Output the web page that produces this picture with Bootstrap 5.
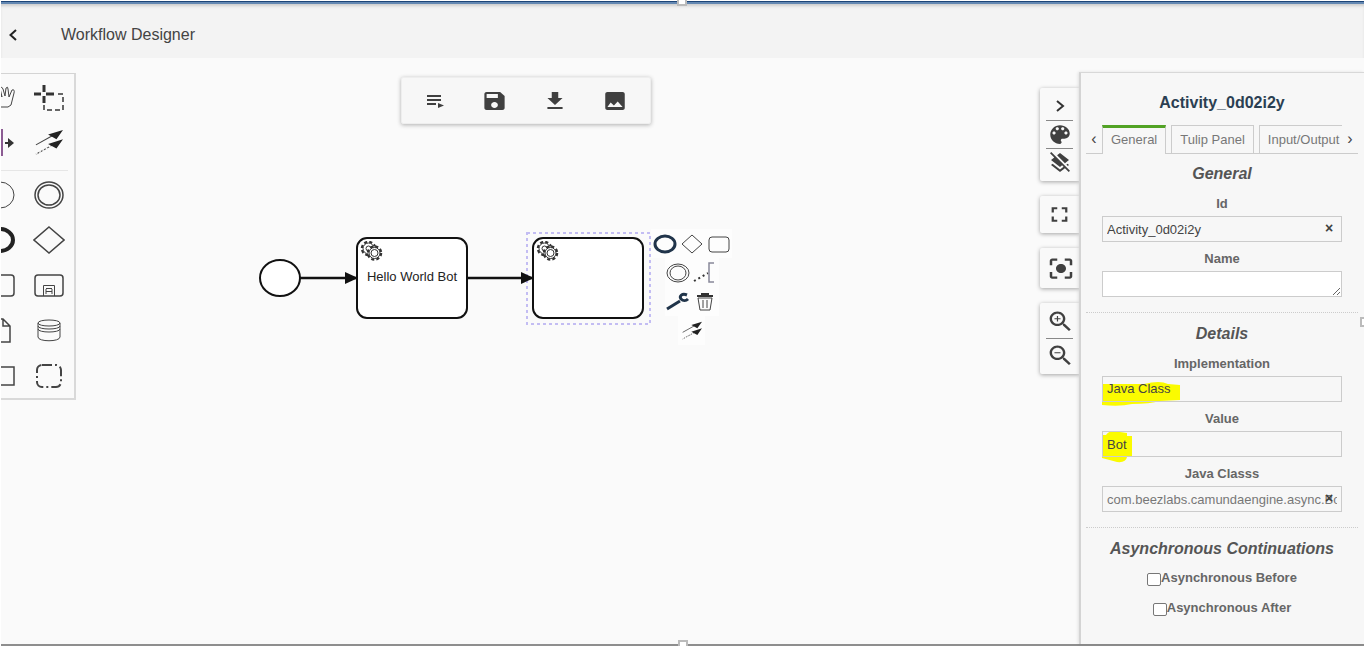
<!DOCTYPE html>
<html lang="en">
<head>
<meta charset="utf-8">
<meta name="viewport" content="width=device-width, initial-scale=1">
<title>Workflow Designer</title>
<link rel="stylesheet" href="https://cdn.jsdelivr.net/npm/bootstrap@5.3.0/dist/css/bootstrap.min.css">
<style>
  body { font-family: "Liberation Sans", Arial, sans-serif; font-size: 13px; color: #555; background: #fff; }
  button { border: 0; padding: 0; background: transparent; color: #404040; }
  svg { display: block; }
  .shell { min-height: 100vh; padding: 1px 0 4px 1px; }
  .app-header { height: 57px; background: #f3f3f3; border-top: 1px solid #1d4577; box-shadow: inset 0 2px #6488b2, inset 0 5px 3px -1px #ccc; padding-top: 9px; }
  .app-header h1 { font-size: 15px; line-height: 20px; color: #444; margin: 0 0 0 36px; }
  .back { width: 20px; height: 20px; }
  .workspace { background: #fafafa; border-bottom: 2px solid #8e8e8e; }
  .canvas { inset: 0; width: 100%; height: 100%; }
  .grip { width: 10px; height: 6px; background: #fff; border: 2px solid #bbb; left: 50%; transform: translateX(-50%); z-index: 5; }
  .grip-top { top: 0; border-top: 0; }
  .grip-bottom { bottom: -2px; border-bottom: 0; }
  .grip-side { width: 4px; height: 10px; right: 0; top: 317px; background: #fff; border: 2px solid #bbb; border-right: 0; z-index: 5; }

  .palette { width: 75px; margin-top: 15px; padding: 1px 0; border: 1px solid #d4d4d4; border-left: 0; border-right: 2px solid #d9d9d9; border-bottom: 2px solid #d9d9d9; background: #fafafa; }
  .palette-group { display: grid; grid-template-columns: 45px 45px; grid-auto-rows: 45px; margin-left: -20px; }
  .palette button { display: grid; place-items: center; }
  .palette hr { margin: 5px 6px 1px 0; border-color: #aaa; }
  .ln { fill: none; stroke: #444; }

  .toolbar { margin: 19px 65px 0 0; width: 250px; height: 47px; background: #f7f7f7; border: 1px solid #eee; border-radius: 2px; box-shadow: 0 1px 4px rgba(0,0,0,.3); padding: 0 5px 0 3px; }
  .toolbar button { width: 60px; height: 40px; display: grid; place-items: center; }

  .context-pad { left: 650px; top: 171px; width: 81px; z-index: 2; }
  .context-pad button { width: 27px; height: 29px; display: grid; place-items: center; background: rgba(255,255,255,.6); }

  .view-tools { width: 39px; margin-top: 30px; gap: 15px; }
  .tool-box { background: #f9f9f9; border-radius: 2px 0 0 2px; box-shadow: 0 1px 4px rgba(0,0,0,.35); padding: 5px 6px 6px; }
  .tool-box.roomy { padding: 7px 6px; }
  .tool-box button { height: 26px; width: 100%; display: grid; place-items: center; }
  .tool-box hr { margin: 1px 0 0; border-color: #888; opacity: 1; }
  .tool-box.zoom hr { margin: 4px 0 3px; }

  .panel { width: 285px; margin-top: 14px; background: #f7f7f7; border-left: 2px solid #d4d4d4; border-top: 1px solid #d8d8d8; box-shadow: -1px 0 3px rgba(0,0,0,.1); padding: 16px 6px 0 5px; position: relative; z-index: 1; }
  .panel h2 { font-size: 16px; line-height: 28px; font-weight: 700; color: #2b3f52; margin: 0 0 8px; text-align: center; }
  .app-header h1 { font-size: 16px; }
  .tab-strip { height: 29px; border-bottom: 1px solid #ccc; }
  .tab-strip .scroller { width: 16px; flex: none; color: #444; font-size: 16px; line-height: 28px; }
  .tab-list { overflow: hidden; gap: 5px; margin-bottom: -1px; height: 29px; }
  .tab-list a { flex: none; height: 28px; line-height: 28px; padding: 0 8px; border: 1px solid #ccc; border-bottom: 0; color: #777; text-decoration: none; }
  .tab-list a.current { border-top: 3px solid #52a325; line-height: 24px; height: 29px; background: #f7f7f7; }
  .group { padding: 0 16px; text-align: center; }
  .panel hr { margin: 15px 0 11px; border-top: 1px dotted #ccc; opacity: 1; }
  .group h3 { font-size: 16px; font-style: italic; font-weight: 700; line-height: 20px; margin: 0 -16px 10px; white-space: nowrap; }
  .group:first-of-type h3 { margin-top: 10px; }
  .field { margin-top: 7px; position: relative; }
  .field label { display: block; font-weight: 700; line-height: 20px; margin-bottom: 2px; color: #666; }
  .field input, .field select, .field textarea { display: block; width: 100%; height: 26px; border: 1px solid #ccc; border-radius: 0; background: transparent; padding: 0 4px; font-size: 13px; line-height: 24px; color: #444; appearance: none; position: relative; }
  .field textarea { background: #fff; resize: vertical; }
  .field .muted-value { color: #777; }
  .clear { position: absolute; right: 6px; bottom: 5px; width: 14px; height: 18px; font-weight: 700; font-size: 14px; line-height: 18px; }
  .marker { position: absolute; left: 0; bottom: -6px; }
  .check-line { height: 30px; font-weight: 700; color: #666; }
  .check-line input { width: 14px; height: 13px; margin: 3px 0 0; appearance: none; border: 1px solid #777; border-radius: 2px; background: #fff; }
</style>
</head>
<body>
<svg width="0" height="0" class="position-absolute" aria-hidden="true">
  <defs>
    <symbol id="connect" viewBox="0 0 32 30">
      <path d="M2 17 L20 7 M2 27 L20 17" fill="none" stroke="#444" stroke-width="1.2"/>
      <path d="M2 27 L20 17" fill="none" stroke="#fafafa" stroke-width="1.6" stroke-dasharray="2 2"/>
      <path d="M31 1 L24 11 L15 6 Z M31 11 L24 21 L15 16 Z" fill="#222"/>
    </symbol>
    <symbol id="gears" viewBox="0 0 24 20">
      <g fill="#fff" stroke="#333">
        <circle cx="8.500" cy="7.500" r="6.500" stroke-width="2.500" stroke-dasharray="3 2.100"/>
        <circle cx="8.500" cy="7.500" r="5.500"/><circle cx="8.500" cy="7.500" r="2.500"/>
        <circle cx="14.500" cy="12" r="6.500" stroke-width="2.500" stroke-dasharray="3 2.100"/>
        <circle cx="14.500" cy="12" r="5.500"/><circle cx="14.500" cy="12" r="3.500"/>
      </g>
    </symbol>
    <marker id="arrow" markerWidth="14" markerHeight="12" refX="12" refY="6" markerUnits="userSpaceOnUse" orient="auto"><path d="M0 0 L13 6 L0 12 Z" fill="#111" stroke="none"/></marker>
  </defs>
</svg>

<div class="shell d-flex flex-column position-relative">
  <span class="grip grip-top position-absolute"></span>
  <span class="grip-side position-absolute"></span>
  <header class="app-header d-flex align-items-center">
    <button class="back ms-1" aria-label="Back"><svg width="16" height="16" viewBox="0 0 16 16"><path d="M11 3 L5.500 8 L11 13" fill="none" stroke="#222" stroke-width="2"/></svg></button>
    <h1 class="fw-normal">Workflow Designer</h1>
  </header>

  <main class="workspace d-flex flex-grow-1 position-relative">
    <svg class="canvas position-absolute" role="img" aria-label="Workflow diagram">
      <rect x="526" y="175" width="123" height="91" fill="none" stroke="#c3bdf3" stroke-width="2" stroke-dasharray="3 3"/>
      <g stroke="#111" stroke-width="2" fill="#fff">
        <ellipse cx="279" cy="220" rx="20" ry="18"/>
        <path d="M299 220 H356" stroke-width="2.500" marker-end="url(#arrow)"/>
        <path d="M467 220 H532" stroke-width="2.500" marker-end="url(#arrow)"/>
        <rect x="356" y="180" width="110" height="80" rx="10"/>
        <rect x="532" y="180" width="110" height="80" rx="10"/>
      </g>
      <use href="#gears" x="359" y="183" width="24" height="20"/>
      <use href="#gears" x="535" y="183" width="24" height="20"/>
      <text x="411" y="223" text-anchor="middle" font-size="13" fill="#222">Hello World Bot</text>
    </svg>

    <nav class="palette overflow-hidden position-relative align-self-start flex-shrink-0" aria-label="Elements">
      <div class="palette-group">
        <button aria-label="Hand tool"><svg width="32" height="30" viewBox="0 0 32 30"><path class="ln" d="M10 17 L8 9 Q9 6 11 9 L14 14 L12 5 Q14 3 15 6 L17 13 L18 5 Q20 3 20 6 L21 14 L24 7 Q27 6 26 10 L23 22 L20 24 H12" stroke="#567"/></svg></button>
        <button aria-label="Lasso tool"><svg width="32" height="30" viewBox="0 0 32 30"><path d="M1 11 H8 M13 11 H21 M11 2 V9 M11 13 V20" stroke="#333" stroke-width="3"/><path d="M25 11 H30 V27 H11 V22" fill="none" stroke="#666" stroke-width="2" stroke-dasharray="5 3"/></svg></button>
        <button aria-label="Space tool"><svg width="32" height="30" viewBox="0 0 32 30"><path d="M14 1 V28" stroke="#8c5c93" stroke-width="2"/><path d="M17 15 H22" stroke="#333" stroke-width="2"/><path d="M20 10 L26 15 L20 20 Z" fill="#333"/></svg></button>
        <button aria-label="Connect"><svg width="30" height="28"><use href="#connect"/></svg></button>
      </div>
      <hr>
      <div class="palette-group">
        <button aria-label="Start event"><svg width="32" height="30" viewBox="0 0 32 30"><ellipse class="ln" cx="12" cy="15" rx="14" ry="13"/></svg></button>
        <button aria-label="Intermediate event"><svg width="32" height="30" viewBox="0 0 32 30"><ellipse class="ln" cx="16" cy="15" rx="14" ry="13" stroke-width="1.500"/><ellipse class="ln" cx="16" cy="15" rx="11" ry="10" stroke-width="1.500"/></svg></button>
        <button aria-label="End event"><svg width="32" height="30" viewBox="0 0 32 30"><ellipse cx="12" cy="15" rx="13" ry="11" fill="none" stroke="#222" stroke-width="4"/></svg></button>
        <button aria-label="Gateway"><svg width="32" height="30" viewBox="0 0 32 30"><path class="ln" stroke-width="1.500" d="M16 2 L31 15 L16 28 L1 15 Z"/></svg></button>
        <button aria-label="Task"><svg width="32" height="30" viewBox="0 0 32 30"><rect class="ln" stroke-width="1.500" x="-4" y="5" width="30" height="21" rx="3"/></svg></button>
        <button aria-label="Subprocess"><svg width="32" height="30" viewBox="0 0 32 30"><rect class="ln" stroke-width="1.500" x="2" y="5" width="28" height="21" rx="3"/><path class="ln" d="M10.500 26 V15.500 H21.500 V26 M13 21.500 H19 M13 19 V24 M19 19 V24 M13 18.500 H19"/></svg></button>
        <button aria-label="Data object"><svg width="32" height="30" viewBox="0 0 32 30"><path class="ln" stroke-width="1.500" d="M6 4 H15 L22 11 V27 H6 M15 4 V11 H22"/></svg></button>
        <button aria-label="Data store"><svg width="32" height="30" viewBox="0 0 32 30"><path class="ln" d="M5 8 V22 C5 27 27 27 27 22 V8 C27 4 5 4 5 8 C5 12 27 12 27 8 M5 11 C5 15 27 15 27 11 M5 14 C5 18 27 18 27 14"/></svg></button>
        <button aria-label="Pool"><svg width="32" height="30" viewBox="0 0 32 30"><rect class="ln" stroke-width="1.500" x="-4" y="7" width="30" height="18"/></svg></button>
        <button aria-label="Group"><svg width="32" height="30" viewBox="0 0 32 30"><rect class="ln" x="4" y="5" width="24" height="22" rx="5" stroke-width="2" stroke-dasharray="10 3 2 3"/></svg></button>
      </div>
    </nav>

    <section class="flex-grow-1 d-flex justify-content-center align-items-start">
      <div class="toolbar position-relative d-flex align-items-center justify-content-between" role="toolbar">
        <button aria-label="Properties list"><svg width="24" height="24" viewBox="0 0 24 24"><path d="M4 7 H18 M4 11 H18 M4 15 H13" stroke="#404040" stroke-width="2"/><path d="M15 14 L21 16.500 L15 19 Z" fill="#404040"/></svg></button>
        <button aria-label="Save"><svg width="27" height="24" viewBox="0 0 24 24" preserveAspectRatio="none" fill="currentColor"><path d="M17 3H5c-1.110 0-2 .9-2 2v14c0 1.100.89 2 2 2h14c1.100 0 2-.9 2-2V7l-4-4zm-5 16c-1.660 0-3-1.340-3-3s1.340-3 3-3 3 1.340 3 3-1.340 3-3 3zm3-10H5V5h10v4z"/></svg></button>
        <button aria-label="Download"><svg width="26" height="24" viewBox="0 0 24 24" preserveAspectRatio="none" fill="currentColor"><path d="M19 9h-4V3H9v6H5l7 7 7-7zM5 18v2h14v-2H5z"/></svg></button>
        <button aria-label="Export image"><svg width="26" height="24" viewBox="0 0 24 24" preserveAspectRatio="none" fill="currentColor"><path d="M21 19V5c0-1.100-.9-2-2-2H5c-1.100 0-2 .9-2 2v14c0 1.100.9 2 2 2h14c1.100 0 2-.9 2-2zM5 18l3-4.500 3 3 3.500-4 4.500 5.500H5z"/></svg></button>
      </div>
    </section>

    <div class="context-pad position-absolute">
      <div class="d-flex justify-content-center">
        <button aria-label="Append end event"><svg width="24" height="20"><ellipse cx="12" cy="10" rx="10" ry="8" fill="none" stroke="#20344a" stroke-width="3"/></svg></button>
        <button aria-label="Append gateway"><svg width="24" height="20"><path class="ln" d="M12 1 L22 10 L12 19 L2 10 Z"/></svg></button>
        <button aria-label="Append task"><svg width="22" height="20"><rect class="ln" x="1" y="3" width="20" height="15" rx="3"/></svg></button>
      </div>
      <div class="d-flex justify-content-center">
        <button aria-label="Append intermediate event"><svg width="24" height="22"><ellipse class="ln" cx="12" cy="11" rx="11" ry="9"/><ellipse class="ln" cx="12" cy="11" rx="8" ry="7"/></svg></button>
        <button aria-label="Add annotation"><svg width="24" height="22"><path d="M1 19 L15 11" stroke="#333" stroke-width="2" stroke-dasharray="2 3"/><path d="M21 1 H16 V20 H21" fill="none" stroke="#889" stroke-width="1.500"/></svg></button>
      </div>
      <div class="d-flex justify-content-center">
        <button aria-label="Change type"><svg width="24" height="20"><path d="M1 17 L14 9" stroke="#20344a" stroke-width="3"/><path d="M21 3 C16 1 13 4 15 7 C17 9 20 9 22 7" fill="none" stroke="#20344a" stroke-width="3"/></svg></button>
        <button aria-label="Delete"><svg width="20" height="20"><path d="M2 4 H18 M6 2 H14" stroke="#333" stroke-width="2"/><path class="ln" d="M3 6 L5 18 H15 L17 6 Z M8 8 V16 M12 8 V16"/></svg></button>
      </div>
      <div class="d-flex justify-content-center">
        <button aria-label="Connect element"><svg width="22" height="20"><use href="#connect"/></svg></button>
      </div>
    </div>

    <div class="view-tools d-flex flex-column flex-shrink-0 position-relative">
      <div class="tool-box">
        <button aria-label="Collapse panel"><svg width="16" height="16" viewBox="0 0 16 16"><path d="M5 3 L11 8 L5 13" fill="none" stroke="#333" stroke-width="2"/></svg></button><hr>
        <button aria-label="Colours"><svg width="26" height="25" viewBox="0 0 24 24" preserveAspectRatio="none" fill="currentColor"><path d="M12 3c-4.970 0-9 4.030-9 9s4.030 9 9 9c.83 0 1.500-.67 1.500-1.500 0-.39-.15-.74-.39-1.010-.23-.26-.38-.61-.38-.99 0-.83.67-1.500 1.500-1.500H16c2.760 0 5-2.240 5-5 0-4.420-4.030-8-9-8zm-5.500 9c-.83 0-1.500-.67-1.500-1.500S5.670 9 6.500 9 8 9.670 8 10.500 7.330 12 6.500 12zm3-4C8.670 8 8 7.330 8 6.500S8.670 5 9.500 5s1.500.67 1.500 1.500S10.330 8 9.500 8zm5 0c-.83 0-1.500-.67-1.500-1.500S13.670 5 14.500 5s1.500.67 1.500 1.500S15.330 8 14.500 8zm3 4c-.83 0-1.500-.67-1.500-1.500S16.670 9 17.500 9s1.500.67 1.500 1.500-.67 1.500-1.500 1.500z"/></svg></button><hr>
        <button aria-label="Clear layers"><svg width="24" height="22" viewBox="0 0 24 22" fill="currentColor"><path d="M19.810 14.990l1.190-.92-1.430-1.430-1.190.92 1.430 1.430zm-.45-4.720L21 9l-9-7-2.910 2.270 7.870 7.880 2.400-1.880zM3.270 1L2 2.270l4.220 4.220L3 9l1.630 1.270L12 16l2.100-1.630 1.430 1.430L12 18.540l-7.370-5.730L3 14.070l9 7 4.950-3.850L20.730 21 22 19.730 3.270 1z"/></svg></button>
      </div>
      <div class="tool-box"><button aria-label="Full screen"><svg width="27" height="25" viewBox="0 0 24 24" preserveAspectRatio="none" fill="currentColor"><path d="M7 14H5v5h5v-2H7v-3zm-2-4h2V7h3V5H5v5zm12 7h-3v2h5v-5h-2v3zM14 5v2h3v3h2V5h-5z"/></svg></button></div>
      <div class="tool-box roomy"><button aria-label="Centre diagram"><svg width="30" height="27" viewBox="0 0 24 24" preserveAspectRatio="none" fill="currentColor"><path d="M12 8c-2.210 0-4 1.790-4 4s1.790 4 4 4 4-1.790 4-4-1.790-4-4-4zm-7 7H3v4c0 1.100.9 2 2 2h4v-2H5v-4zM5 5h4V3H5c-1.100 0-2 .9-2 2v4h2V5zm14-2h-4v2h4v4h2V5c0-1.100-.9-2-2-2zm0 16h-4v2h4c1.100 0 2-.9 2-2v-4h-2v4z"/></svg></button></div>
      <div class="tool-box zoom">
        <button aria-label="Zoom in"><svg width="29" height="27" viewBox="0 0 24 24" preserveAspectRatio="none" fill="currentColor"><path d="M15.500 14h-.79l-.28-.27C15.410 12.590 16 11.110 16 9.500 16 5.910 13.090 3 9.500 3S3 5.910 3 9.500 5.910 16 9.500 16c1.610 0 3.090-.59 4.230-1.570l.27.28v.79l5 4.990L20.490 19l-4.990-5zm-6 0C7.010 14 5 11.990 5 9.500S7.010 5 9.500 5 14 7.010 14 9.500 11.990 14 9.500 14zm2.500-4h-2v2H9v-2H7V9h2V7h1v2h2v1z"/></svg></button><hr>
        <button aria-label="Zoom out"><svg width="29" height="27" viewBox="0 0 24 24" preserveAspectRatio="none" fill="currentColor"><path d="M15.500 14h-.79l-.28-.27C15.410 12.590 16 11.110 16 9.500 16 5.910 13.090 3 9.500 3S3 5.910 3 9.500 5.910 16 9.500 16c1.610 0 3.090-.59 4.230-1.570l.27.28v.79l5 4.990L20.490 19l-4.990-5zm-6 0C7.010 14 5 11.990 5 9.500S7.010 5 9.500 5 14 7.010 14 9.500 11.990 14 9.500 14zM7 9h5v1H7z"/></svg></button>
      </div>
    </div>

    <aside class="panel flex-shrink-0">
      <h2>Activity_0d02i2y</h2>
      <div class="tab-strip d-flex">
        <button class="scroller" aria-label="Previous tabs">‹</button>
        <nav class="tab-list d-flex flex-grow-1">
          <a class="current" href="#general">General</a>
          <a href="#tulip">Tulip Panel</a>
          <a href="#io">Input/Output</a>
        </nav>
        <button class="scroller" aria-label="Next tabs">›</button>
      </div>
      <section class="group" id="general">
        <h3>General</h3>
        <div class="field"><label for="el-id">Id</label><input id="el-id" type="text" value="Activity_0d02i2y"><button class="clear" aria-label="Clear id">×</button></div>
        <div class="field"><label for="el-name">Name</label><textarea id="el-name" rows="1"></textarea></div>
      </section>
      <hr>
      <div class="group">
        <h3>Details</h3>
        <div class="field"><label for="impl">Implementation</label>
          <svg class="marker" width="80" height="30"><path d="M0 6 L42 6 Q58 2 66 6 L78 7 V22 L58 23 Q48 26 30 26 Q18 29 0 27 Z" fill="#fbfb00"/></svg>
          <select id="impl"><option>Java Class</option></select></div>
        <div class="field"><label for="val">Value</label>
          <svg class="marker" width="36" height="34"><path d="M0 6 H4 Q8 0 18 3 L25 4 V7 H30 V28 H25 Q24 34 15 33 L0 29 Z" fill="#fbfb00"/></svg>
          <input id="val" type="text" value="Bot"></div>
        <div class="field"><label for="cls">Java Classs</label><input id="cls" class="muted-value" type="text" value="com.beezlabs.camundaengine.async.Bot"><button class="clear" aria-label="Clear class">×</button></div>
      </div>
      <hr>
      <div class="group">
        <h3 class="mb-1">Asynchronous Continuations</h3>
        <div class="check-line d-flex align-items-center justify-content-center"><input id="before" type="checkbox"><label for="before">Asynchronous Before</label></div>
        <div class="check-line d-flex align-items-center justify-content-center"><input id="after" type="checkbox"><label for="after">Asynchronous After</label></div>
      </div>
    </aside>
    <span class="grip grip-bottom position-absolute"></span>
  </main>
</div>
<script src="https://cdn.jsdelivr.net/npm/bootstrap@5.3.0/dist/js/bootstrap.bundle.min.js"></script>
</body>
</html>
